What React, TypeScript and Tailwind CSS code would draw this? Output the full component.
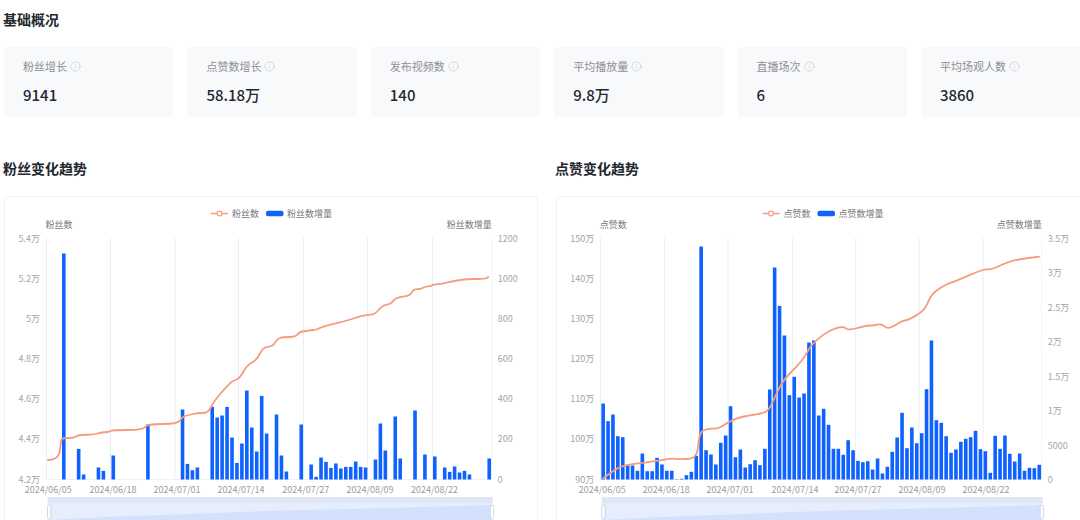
import { Info } from "lucide-react";

type Bar = [number, number];
type Tick = [string, number];

const fansBars: Bar[] = [
  [3, 226], [6, 30.6], [7, 5], [10, 12], [11, 8.6], [13, 24], [20, 55], [27, 70], [28, 15.6], [29, 9.3], [30, 12],
  [33, 72.6], [34, 62], [35, 64], [36, 72.6], [37, 42], [38, 16.6], [39, 36], [40, 89], [41, 52], [42, 28], [43, 83.6], [44, 46],
  [46, 65], [47, 24], [48, 8], [51, 55], [53, 15], [54, 2.6], [55, 22], [56, 17.6], [57, 11.6], [58, 16], [59, 11], [60, 12.6],
  [61, 12.6], [62, 18], [63, 12.6], [64, 12], [66, 20], [67, 56], [68, 29], [70, 63], [71, 21], [74, 69], [76, 25], [78, 23],
  [80, 12], [81, 7.6], [82, 13], [83, 7], [84, 8.6], [85, 5], [89, 21],
];

const likesHeights = [
  76, 58.3, 65, 43.3, 42.3, 14, 14, 8.7, 26, 8.3, 8.3, 21.7, 15, 8.7, 8.7, 0.3, 0.7, 4.3, 7.7, 23.7,
  233, 29.3, 25, 15, 36.7, 44, 73.3, 22.3, 30, 12, 15.3, 19.3, 14.3, 30.7, 90, 212, 173.6, 144, 84.3, 102.7,
  82, 86, 137, 139, 64, 70.7, 54.7, 30.7, 30.7, 24.7, 39.3, 29.3, 18.7, 17.3, 18.3, 10, 21, 6, 12.7, 27.7,
  42, 66.7, 31.3, 52, 36.3, 46.3, 90.3, 139, 59.3, 56.7, 43.3, 26.7, 30, 37.7, 40.7, 42.3, 48.7, 30.3, 28.3, 6.7,
  43.7, 30.7, 44, 25.7, 18, 26, 8.7, 11.7, 11.3, 14.7,
];
const likesBars: Bar[] = likesHeights.map((h, i) => [i, h]);

const fansLine =
  "48,460 59,460 61,440 63,438 74,438 78,435 95,434.5 100,432.5 109,432 112,430 143,430 147,424 178,424 182,417 187,415.5 197,413 208,413 213,403 220,394 230,383 233,381 240,378 247,365 257,360 263,347 272.7,346.7 277,339 283,337 296,337 299.3,331.7 306.7,331.3 310,330 316.7,330 321.7,326.7 350,320 360,316 370,314.7 375,314 383,305 390.7,304.3 396,297.3 410,296 413.3,289.3 421.7,289 424,286.7 431.7,286 433,284.3 440,284.3 453,281 466.7,279 485,279 488.3,277";

const likesLine =
  "603.3,478.3 615,469.3 625,465 640,463.3 656.7,461 671.7,458.3 678,459.3 696.7,458.7 698.7,440 701,431 710,428.3 718,429 730,421 741.7,416.7 763,413.3 769,410 776.7,393.3 783.3,380 803,360 810,346.7 816.7,340 828.3,330.7 843.3,326 848.3,330.7 866.7,325.3 873.3,325.7 881.7,323.7 887.3,329 896,325 901.7,321 908.3,320 920,313.3 926,307.3 931.7,293.3 946.7,284 956.7,280.7 983.3,269 991.7,269.7 1006.7,262.3 1018.3,259.3 1039.3,256.7";

// rounds the corners of a point list, echarts draws these lines smoothed
function smoothPath(points: string) {
  const pts = points.split(" ").map((p) => p.split(",").map(Number));
  let d = `M${pts[0][0]},${pts[0][1]}`;
  for (let i = 1; i < pts.length - 1; i++) {
    const mx = (pts[i][0] + pts[i + 1][0]) / 2;
    const my = (pts[i][1] + pts[i + 1][1]) / 2;
    d += ` Q${pts[i][0]},${pts[i][1]} ${mx},${my}`;
  }
  const last = pts[pts.length - 1];
  return `${d} L${last[0]},${last[1]}`;
}

const stats = [
  { label: "粉丝增长", value: "9141" },
  { label: "点赞数增长", value: "58.18万" },
  { label: "发布视频数", value: "140" },
  { label: "平均播放量", value: "9.8万" },
  { label: "直播场次", value: "6" },
  { label: "平均场观人数", value: "3860" },
];

function StatCard({ label, value }: { label: string; value: string }) {
  return (
    <div className="flex h-[70px] w-[169.4px] shrink-0 flex-col rounded-[3px] bg-[#f8f9fb] pl-[19px] pt-[11px]">
      <div className="flex h-[16px] items-center gap-[3px] text-[11px] text-[#8d8f94]">
        {label}
        <Info size={11} strokeWidth={1} className="text-[#b4b6ba]" />
      </div>
      <div className="mt-[10px] text-[15px] font-medium leading-[22px] text-[#23272e]">{value}</div>
    </div>
  );
}

type ChartProps = {
  originX: number;
  plotLeft: number;
  plotRight: number;
  grid: number[];
  bars: Bar[];
  line: string;
  name: string;
  legendX: number;
  leftTicks: Tick[];
  rightTicks: Tick[];
  dates: number[];
};

const dateLabels = ["2024/06/05", "2024/06/18", "2024/07/01", "2024/07/14", "2024/07/27", "2024/08/09", "2024/08/22"];

function TrendChart({ originX, plotLeft, plotRight, grid, bars, line, name, legendX, leftTicks, rightTicks, dates }: ChartProps) {
  const step = (plotRight - plotLeft) / 90;
  return (
    <div className="h-[340px] w-[534px] shrink-0 rounded-[4px] border border-[#f1f2f5]">
      <svg width="534" height="340" className="-ml-px -mt-px block text-[9px]">
        <g transform={`translate(${-originX},-196)`}>
          {/* legend */}
          <line x1={legendX} x2={legendX + 17} y1="213.5" y2="213.5" stroke="#f59b80" strokeWidth="1.5" />
          <circle cx={legendX + 8.5} cy="213.5" r="2.4" fill="#fff" stroke="#f59b80" strokeWidth="1.2" />
          <text x={legendX + 21} y="216.5" fill="#777">{name}数</text>
          <rect x={legendX + 55} y="210.8" width="17.5" height="5.4" rx="2" fill="#0f62fe" />
          <text x={legendX + 76} y="216.5" fill="#777">{name}数增量</text>

          {/* axis names */}
          <text x={plotLeft - 1} y="227.5" fill="#777">{name}数</text>
          <text x={plotRight} y="227.5" textAnchor="end" fill="#777">{name}数增量</text>

          {/* grid */}
          {grid.map((x) => (
            <line key={x} x1={x} x2={x} y1="238" y2="479.5" stroke="#e9edf6" />
          ))}
          <line x1={plotRight} x2={plotRight} y1="238" y2="479.5" stroke="#f1f3f8" />
          <line x1={plotLeft} x2={plotRight} y1="479.5" y2="479.5" stroke="#eef0f5" />

          {/* ticks */}
          {leftTicks.map(([t, y]) => (
            <text key={t} x={plotLeft - 6.5} y={y + 3} textAnchor="end" fill="#a3a5a9">{t}</text>
          ))}
          {rightTicks.map(([t, y]) => (
            <text key={t} x={plotRight + 6} y={y + 3} fill="#a3a5a9">{t}</text>
          ))}
          {dates.map((x, i) => (
            <text key={x} x={x} y="492.5" textAnchor="middle" fill="#9a9ca0">{dateLabels[i]}</text>
          ))}

          {/* series */}
          {bars.map(([i, h]) => (
            <rect key={i} x={plotLeft + step * (i + 0.5) - 1.8} y={479.5 - h} width="3.6" height={h} fill="#0f62fe" />
          ))}
          <path d={smoothPath(line)} fill="none" stroke="#f59b80" strokeWidth="1.8" strokeLinecap="round" />

          {/* data zoom */}
          <rect x={plotLeft + 1} y="497" width={plotRight - plotLeft} height="6" fill="#dfe6f6" />
          <rect x={plotLeft + 1} y="503" width={plotRight - plotLeft} height="18" fill="#e6edfd" />
          <polygon
            points={`${plotLeft + 2},520 ${plotLeft + 60},517 ${plotLeft + 220},511 ${plotLeft + 300},509 ${plotRight},505 ${plotRight},521 ${plotLeft + 2},521`}
            fill="#d4e1fc"
          />
          <rect x={plotLeft + 1} y="505.5" width="3.4" height="13" rx="1" fill="#fff" stroke="#c6cede" strokeWidth="0.8" />
          <rect x={plotRight - 1.5} y="505.5" width="3.4" height="13" rx="1" fill="#fff" stroke="#c6cede" strokeWidth="0.8" />
        </g>
      </svg>
    </div>
  );
}

export default function App() {
  return (
    <div className="h-[520px] w-[1080px] overflow-hidden bg-white pl-[4px] pt-[9px] font-['Noto_Sans_CJK_SC','Noto_Sans',sans-serif]">
      <h2 className="-ml-[1px] h-[20px] text-[14px] font-bold leading-[20px] text-[#23272e]">基础概况</h2>
      <div className="mt-[18px] flex gap-[14px]">
        {stats.map((s) => (
          <StatCard key={s.label} label={s.label} value={s.value} />
        ))}
      </div>
      <div className="mt-[41px] flex gap-[18px]">
        <div className="shrink-0">
          <h2 className="-ml-[1px] h-[20px] text-[14px] font-bold leading-[20px] text-[#23272e]">粉丝变化趋势</h2>
          <div className="mt-[18px]">
            <TrendChart
              originX={4}
              plotLeft={46.5}
              plotRight={491.7}
              grid={[46.5, 110.5, 175, 238.5, 303.5, 367.5, 432.5]}
              bars={fansBars}
              line={fansLine}
              name="粉丝"
              legendX={211}
              leftTicks={[["5.4万", 238.5], ["5.2万", 279], ["5万", 319], ["4.8万", 359], ["4.6万", 399], ["4.4万", 439], ["4.2万", 479.5]]}
              rightTicks={[["1200", 238.5], ["1000", 279], ["800", 319], ["600", 359], ["400", 399], ["200", 439], ["0", 479.5]]}
              dates={[48.3, 113, 177, 241, 305.7, 370, 434.5]}
            />
          </div>
        </div>
        <div className="shrink-0">
          <h2 className="-ml-[1px] h-[20px] text-[14px] font-bold leading-[20px] text-[#23272e]">点赞变化趋势</h2>
          <div className="mt-[18px]">
            <TrendChart
              originX={556}
              plotLeft={600.7}
              plotRight={1041.7}
              grid={[600.7, 664.7, 728, 792.7, 855.7, 919, 983]}
              bars={likesBars}
              line={likesLine}
              name="点赞"
              legendX={762.5}
              leftTicks={[["150万", 238.5], ["140万", 279], ["130万", 319], ["120万", 359], ["110万", 399], ["100万", 439], ["90万", 479.5]]}
              rightTicks={[["3.5万", 238.5], ["3万", 273], ["2.5万", 307.7], ["2万", 342], ["1.5万", 376.7], ["1万", 411], ["5000", 445.7], ["0", 479.7]]}
              dates={[602.3, 666.3, 730, 795, 858, 922, 986]}
            />
          </div>
        </div>
      </div>
    </div>
  );
}
